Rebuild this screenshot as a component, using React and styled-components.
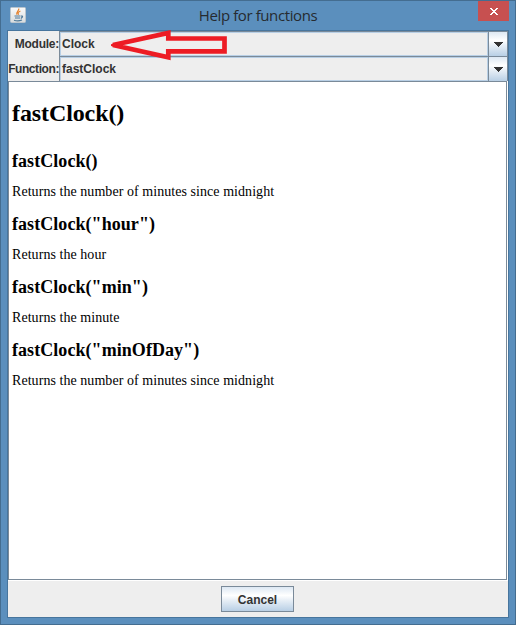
import React from "react";
import styled, { createGlobalStyle } from "styled-components";

const GlobalStyle = createGlobalStyle`
  * { box-sizing: border-box; }
  body { margin: 0; overflow: hidden; }
`;

const Window = styled.div`
  position: relative;
  width: 516px;
  height: 625px;
  display: flex;
  flex-direction: column;
  background: #5b8fbd;
  border: 1px solid #446d90;
  padding: 0 6px 6px;
`;

const TitleBar = styled.header`
  height: 29px;
  flex: none;
  display: grid;
  grid-template-columns: 31px 1fr 31px;
  align-items: start;
  padding-left: 3px;
`;

const JavaIcon = styled.svg`
  display: block;
  margin-top: 6px;
`;

const Title = styled.h1`
  margin: 0;
  padding: 4px 3px 0 0;
  text-align: center;
  font: 400 15px/20px "Open Sans", "Noto Sans", sans-serif;
  letter-spacing: -0.4px;
  color: #262b30;
`;

const CloseButton = styled.button`
  width: 31px;
  height: 20px;
  padding: 0;
  border: 0;
  background: #c75050;
  display: flex;
  align-items: center;
  justify-content: center;
`;

const Content = styled.main`
  flex: 1;
  min-height: 0;
  display: flex;
  flex-direction: column;
  background: #eeeeee;
  border: 1px solid #47759d;
`;

const Field = styled.div`
  height: 25px;
  flex: none;
  display: grid;
  grid-template-columns: 51px 1fr;
`;

const Label = styled.label`
  display: flex;
  justify-content: flex-end;
  padding-top: 1px;
  font: bold 12px/25px "Liberation Sans", Arial, sans-serif;
  white-space: nowrap;
  letter-spacing: ${(p) => p.$spacing};
  color: #333333;
`;

const Combo = styled.div`
  display: grid;
  grid-template-columns: 1fr 19px;
  border: 1px solid #7a8a99;
`;

const ComboValue = styled.div`
  border: 1px solid #b8cfe5;
  padding: 1px 0 0 1px;
  font: bold 12px/21px "Liberation Sans", Arial, sans-serif;
  color: #333333;
`;

const ComboButton = styled.button`
  padding: 0;
  border: 0;
  border-left: 1px solid #7a8a99;
  display: flex;
  align-items: center;
  justify-content: center;
  background: linear-gradient(#dde8f3 0%, #ffffff 35%, #e8eff6 55%, #b8cfe5 100%);
`;

const DocumentFrame = styled.div`
  flex: 1;
  min-height: 0;
  display: flex;
  flex-direction: column;
  background: #ffffff;
  padding-bottom: 1px;
`;

const Document = styled.article`
  flex: 1;
  min-height: 0;
  background: #ffffff;
  border: 1px solid #7a8a99;
  margin-right: 1px;
  padding: 17px 3px 0;
  font: 14px/17px "Liberation Serif", "Times New Roman", serif;
  color: #000000;
`;

const PageHeading = styled.h2`
  margin: 0 0 24px;
  font-size: 24px;
  line-height: 28px;
  letter-spacing: -0.1px;
`;

const Entry = styled.section`
  height: 63px;
`;

const EntryHeading = styled.h3`
  margin: 0 0 12px;
  font-size: 18px;
  line-height: 20px;
  letter-spacing: 0.06px;
`;

const Description = styled.p`
  margin: 0;
  letter-spacing: 0.055px;
`;

const Footer = styled.footer`
  height: 36px;
  flex: none;
  display: flex;
  justify-content: center;
  padding: 5px 1px 0 0;
`;

const CancelButton = styled.button`
  width: 73px;
  height: 26px;
  padding: 2px 0 0;
  border: 1px solid #7a8a99;
  background: linear-gradient(#dde8f3 0%, #ffffff 35%, #e8eff6 55%, #b8cfe5 100%);
  font: bold 12px/22px "Liberation Sans", Arial, sans-serif;
  color: #333333;
`;

const ArrowAnnotation = styled.svg`
  position: absolute;
  left: 107px;
  top: 27px;
`;

const entries = [
  { call: "fastClock()", text: "Returns the number of minutes since midnight" },
  { call: 'fastClock("hour")', text: "Returns the hour" },
  { call: 'fastClock("min")', text: "Returns the minute" },
  { call: 'fastClock("minOfDay")', text: "Returns the number of minutes since midnight" },
];

function SelectField({ label, value, spacing }) {
  return (
    <Field>
      <Label $spacing={spacing}>{label}</Label>
      <Combo>
        <ComboValue>{value}</ComboValue>
        <ComboButton aria-label={label}>
          <svg width="10" height="5" shapeRendering="crispEdges">
            <path d="M0 0H10L5 5Z" fill="#333333" />
          </svg>
        </ComboButton>
      </Combo>
    </Field>
  );
}

export default function App() {
  return (
    <>
      <GlobalStyle />
      <Window>
        <TitleBar>
          <JavaIcon width="16" height="16" viewBox="0 0 16 16">
            <defs>
              <linearGradient id="tile" x2="0" y2="1">
                <stop stopColor="#fafafa" />
                <stop offset="1" stopColor="#d8dcde" />
              </linearGradient>
            </defs>
            <rect x=".5" y=".5" width="15" height="15" rx="1" fill="url(#tile)" stroke="#b9c5ce" />
            <path d="M8.8 1.5C9.3 4 5.5 4.5 7 7.8M10.4 4C8 5 7.6 5.8 8.6 7.8" fill="none" stroke="#e5832f" strokeWidth="1.2" />
            <path d="M4.5 9H10.5M5 11H10M4 13.2Q8 14.6 12 13M11 9Q14.2 9 10.8 11.4" fill="none" stroke="#507b9b" strokeWidth="1.2" />
          </JavaIcon>
          <Title>Help for functions</Title>
          <CloseButton aria-label="Close">
            <svg width="8" height="7" viewBox="0 0 8 7" shapeRendering="crispEdges">
              <path d="M0 0h2v1h1v1h2v-1h1v-1h2v1h-1v1h-1v1h-1v1h1v1h1v1h1v1h-2v-1h-1v-1h-2v1h-1v1h-2v-1h1v-1h1v-1h1v-1h-1v-1h-1v-1h-1z" fill="#fff" />
            </svg>
          </CloseButton>
        </TitleBar>
        <Content>
          <SelectField label="Module:" value="Clock" spacing="-0.25px" />
          <SelectField label="Function:" value="fastClock" spacing="-0.42px" />
          <DocumentFrame>
            <Document>
              <PageHeading>fastClock()</PageHeading>
              {entries.map((entry) => (
                <Entry key={entry.call}>
                  <EntryHeading>{entry.call}</EntryHeading>
                  <Description>{entry.text}</Description>
                </Entry>
              ))}
            </Document>
          </DocumentFrame>
          <Footer>
            <CancelButton>Cancel</CancelButton>
          </Footer>
        </Content>
        <ArrowAnnotation width="124" height="36" viewBox="108 28 124 36">
          <path d="M113 45L168.3 33V38.5H224.5V51.3H168.3V57.3Z" fill="none" stroke="#ed1c24" strokeWidth="4.7" strokeLinejoin="miter" />
          <path d="M111 44.3L122 41.5V48.5L111 46Z" fill="#ed1c24" />
        </ArrowAnnotation>
      </Window>
    </>
  );
}
